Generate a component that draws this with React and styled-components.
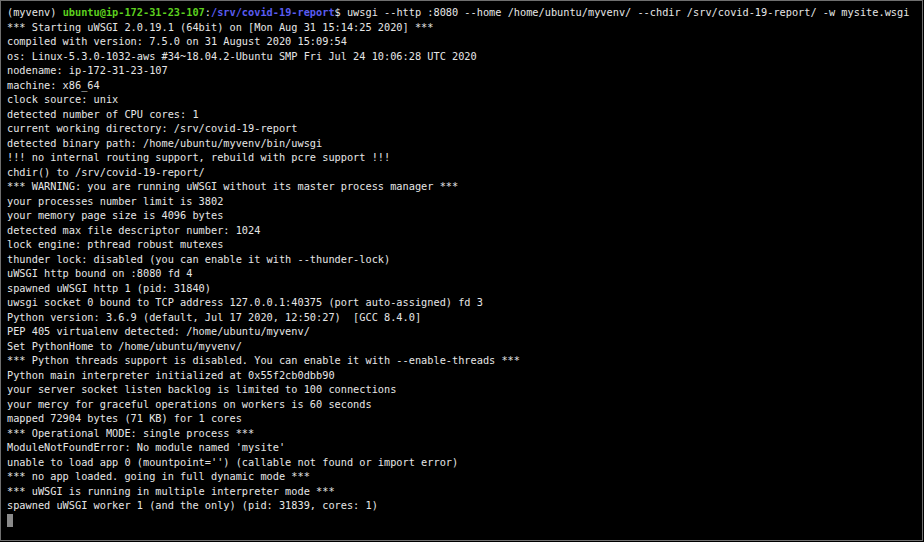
import React from "react";
import styled, { createGlobalStyle } from "styled-components";

const Global = createGlobalStyle`
  html, body { margin: 0; padding: 0; background: #000; }
  #root { width: 924px; height: 542px; }
`;

const Terminal = styled.div`
  box-sizing: border-box;
  width: 923px;
  height: 541px;
  background: #000;
  border: 1px solid #6f6f6f;
  padding: 4px 0 0 6px;
  font-family: "DejaVu Sans Mono", "Liberation Mono", monospace;
  font-size: 10.27px;
  line-height: 14.5px;
  color: #e6e6e6;
  overflow: hidden;
`;

const Line = styled.div`
  white-space: pre;
  height: 14.5px;
`;

const User = styled.span`
  color: #5ccf1e;
  font-weight: bold;
`;

const Path = styled.span`
  color: #5a5cf0;
  font-weight: bold;
`;

const Cursor = styled.span`
  display: inline-block;
  width: 6px;
  height: 13px;
  margin-top: 1px;
  background: #8a8a8a;
  vertical-align: top;
`;

const lines = [
  "*** Starting uWSGI 2.0.19.1 (64bit) on [Mon Aug 31 15:14:25 2020] ***",
  "compiled with version: 7.5.0 on 31 August 2020 15:09:54",
  "os: Linux-5.3.0-1032-aws #34~18.04.2-Ubuntu SMP Fri Jul 24 10:06:28 UTC 2020",
  "nodename: ip-172-31-23-107",
  "machine: x86_64",
  "clock source: unix",
  "detected number of CPU cores: 1",
  "current working directory: /srv/covid-19-report",
  "detected binary path: /home/ubuntu/myvenv/bin/uwsgi",
  "!!! no internal routing support, rebuild with pcre support !!!",
  "chdir() to /srv/covid-19-report/",
  "*** WARNING: you are running uWSGI without its master process manager ***",
  "your processes number limit is 3802",
  "your memory page size is 4096 bytes",
  "detected max file descriptor number: 1024",
  "lock engine: pthread robust mutexes",
  "thunder lock: disabled (you can enable it with --thunder-lock)",
  "uWSGI http bound on :8080 fd 4",
  "spawned uWSGI http 1 (pid: 31840)",
  "uwsgi socket 0 bound to TCP address 127.0.0.1:40375 (port auto-assigned) fd 3",
  "Python version: 3.6.9 (default, Jul 17 2020, 12:50:27)  [GCC 8.4.0]",
  "PEP 405 virtualenv detected: /home/ubuntu/myvenv/",
  "Set PythonHome to /home/ubuntu/myvenv/",
  "*** Python threads support is disabled. You can enable it with --enable-threads ***",
  "Python main interpreter initialized at 0x55f2cb0dbb90",
  "your server socket listen backlog is limited to 100 connections",
  "your mercy for graceful operations on workers is 60 seconds",
  "mapped 72904 bytes (71 KB) for 1 cores",
  "*** Operational MODE: single process ***",
  "ModuleNotFoundError: No module named 'mysite'",
  "unable to load app 0 (mountpoint='') (callable not found or import error)",
  "*** no app loaded. going in full dynamic mode ***",
  "*** uWSGI is running in multiple interpreter mode ***",
  "spawned uWSGI worker 1 (and the only) (pid: 31839, cores: 1)",
];

export default function App() {
  return (
    <>
      <Global />
      <Terminal>
        <Line>
          (myvenv) <User>ubuntu@ip-172-31-23-107</User>:<Path>/srv/covid-19-report</Path>$ uwsgi --http :8080 --home /home/ubuntu/myvenv/ --chdir /srv/covid-19-report/ -w mysite.wsgi
        </Line>
        {lines.map((l, i) => (
          <Line key={i}>{l}</Line>
        ))}
        <Line>
          <Cursor />
        </Line>
      </Terminal>
    </>
  );
}
